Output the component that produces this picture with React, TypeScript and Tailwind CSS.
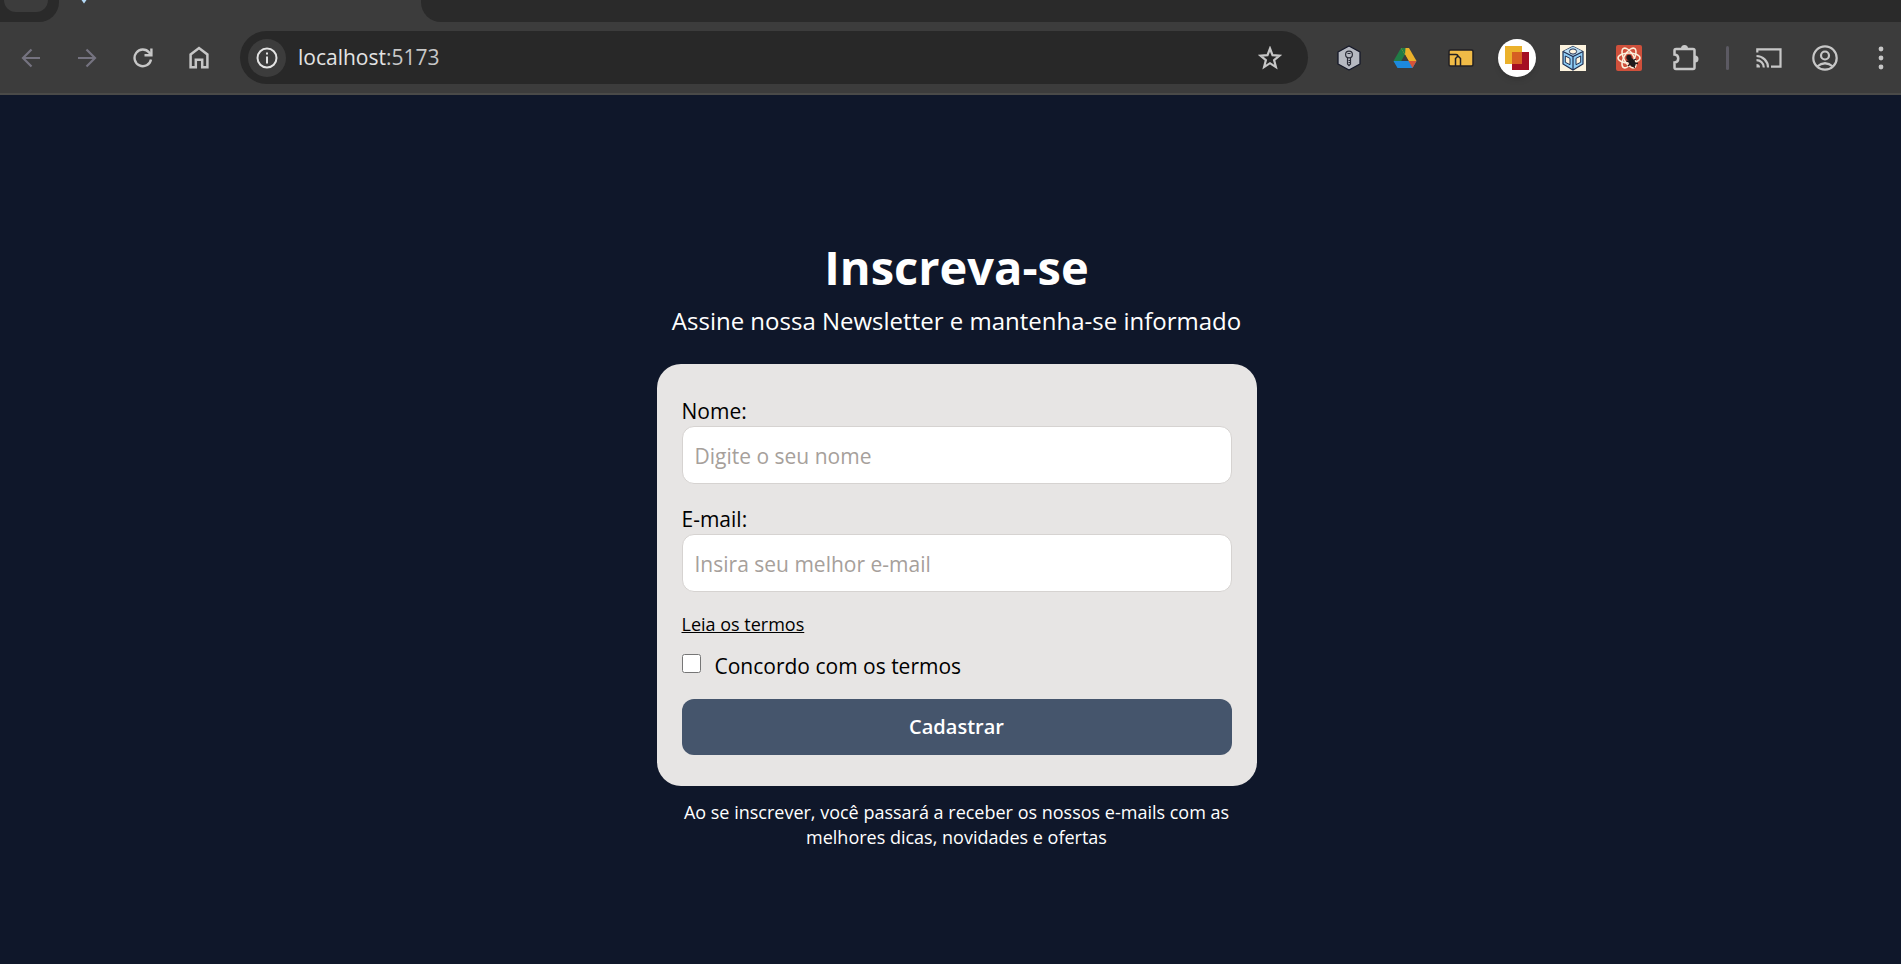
import type { ReactNode } from "react";

function ToolButton({ label, className, children }: { label: string; className: string; children: ReactNode }) {
  return (
    <button type="button" aria-label={label} className={`flex shrink-0 items-center justify-center ${className}`}>
      {children}
    </button>
  );
}

function BackIcon() {
  return (
    <svg width="20" height="20" viewBox="0 0 20 20" fill="none" stroke="currentColor" strokeWidth="2.200">
      <path d="M19 10H2M10.500 1.500L2 10l8.500 8.500" />
    </svg>
  );
}

function ForwardIcon() {
  return (
    <svg width="20" height="20" viewBox="0 0 20 20" fill="none" stroke="currentColor" strokeWidth="2.200">
      <path d="M1 10h17M9.500 1.500L18 10l-8.500 8.500" />
    </svg>
  );
}

function ReloadIcon() {
  return (
    <svg width="20" height="20" viewBox="0 0 20 20" fill="none" stroke="currentColor" strokeWidth="2.400">
      <path d="M18 11.500A8.300 8.300 0 1 1 16.200 4.500L18 7" />
      <path d="M18.400 0.500V7.200H11.500" />
    </svg>
  );
}

function HomeIcon() {
  return (
    <svg width="20" height="23" viewBox="0 0 20 23" fill="none" stroke="currentColor" strokeWidth="2.500">
      <path d="M1.600 8.400L10 2l8.400 6.400v12.900h-5.200v-7.600H6.800v7.600H1.600z" />
    </svg>
  );
}

function InfoIcon() {
  return (
    <svg width="22" height="22" viewBox="0 0 22 22" fill="none" stroke="currentColor" strokeWidth="2">
      <circle cx="11" cy="11" r="9.500" />
      <path d="M11 9.500v7M11 5.500v2" />
    </svg>
  );
}

function StarIcon() {
  return (
    <svg width="24" height="24" viewBox="0 0 24 24" fill="none" stroke="currentColor" strokeWidth="2.200">
      <path d="M12 2.500l2.500 6.600 7 .5-5.400 4.500 1.800 7L12 17.200 6.100 21.100l1.800-7L2.500 9.600l7-.5z" />
    </svg>
  );
}

function KeyIcon() {
  return (
    <svg width="26" height="26" viewBox="0 0 26 26">
      <path d="M13 1l11 6v12l-11 6-11-6V7z" fill="#b6b9c1" stroke="#151828" strokeWidth="1.300" strokeLinejoin="round" />
      <g fill="none" stroke="#2b2d38" strokeWidth="1.200">
        <circle cx="13" cy="9.500" r="3.400" />
        <path d="M11.500 13v6l1.500 1.700 1.500-1.700V13M14.500 15.500h-2M14.500 17.500h-2M11.500 8.500h3" />
      </g>
    </svg>
  );
}

function DriveIcon() {
  return (
    <svg width="24" height="22" viewBox="0 0 24 22">
      <path d="M8 1h8l-4 7-7 13L0.500 14z" fill="#217c46" />
      <path d="M8 1h8l7.500 13h-8z" fill="#ebb12b" />
      <path d="M8 1h4.500L12 7.500z" fill="#217c46" />
      <path d="M0.500 14h23L19.500 21h-15z" fill="#1d89dd" />
      <path d="M15.500 14h8L19.500 21z" fill="#d65439" />
      <path d="M12 7.500L15.700 14H8.300z" fill="#3b3b3b" />
    </svg>
  );
}

function FolderCardIcon() {
  return (
    <svg width="26" height="18" viewBox="0 0 26 18">
      <rect x="1" y="1" width="24" height="16" rx="1.500" fill="#f0bb47" stroke="#201f24" strokeWidth="1.500" />
      <path d="M1 5.500h7q2 0 2 2.500M7.500 17V9.500L9.500 7.500h1l2 2V17" fill="none" stroke="#201f24" strokeWidth="1.500" />
    </svg>
  );
}

function SquaresIcon() {
  return (
    <svg width="26" height="26" viewBox="0 0 26 26">
      <rect x="1" y="1" width="17" height="18" fill="#ebb12b" />
      <rect x="8" y="7" width="17" height="18" fill="#a50f23" />
      <rect x="8" y="7" width="10" height="12" fill="#d65f22" />
    </svg>
  );
}

function CubeIcon() {
  return (
    <svg width="26" height="26" viewBox="0 0 26 26">
      <rect width="26" height="26" fill="#fdf4df" />
      <path d="M13 1.500l10 5V19l-10 6-10-6V6.500z" fill="#8fcdf5" stroke="#1f2f52" strokeWidth="1.200" />
      <path d="M13 1.500l10 5-10 5-10-5z" fill="#b9ddf2" />
      <path d="M3 6.500l10 5 10-5M13 11.500V25" fill="none" stroke="#1f2f52" strokeWidth="1.200" />
      <ellipse cx="13" cy="6.500" rx="3.600" ry="2.600" fill="#fdf4df" stroke="#1f2f52" />
      <path d="M5.300 11l4.700 2.400v6.300L5.300 17.300zM20.700 11L16 13.400v6.300l4.700-2.400z" fill="#fdf4df" stroke="#1f2f52" />
    </svg>
  );
}

function ReactBugIcon() {
  return (
    <svg width="26" height="26" viewBox="0 0 26 26">
      <rect width="26" height="26" rx="2" fill="#d0503b" />
      <g fill="none" stroke="#fbf0dc" strokeWidth="1.500">
        <ellipse cx="13" cy="13" rx="11" ry="5" />
        <ellipse cx="13" cy="13" rx="11" ry="5" transform="rotate(60 13 13)" />
        <ellipse cx="13" cy="13" rx="11" ry="5" transform="rotate(120 13 13)" />
      </g>
      <g fill="#201a1c" stroke="#201a1c" strokeWidth="1.300">
        <circle cx="13" cy="12.500" r="2" />
        <ellipse cx="16" cy="17.500" rx="2.400" ry="4" transform="rotate(-30 16 17.500)" />
        <path d="M10.500 16l4 1M12 21l3-2.500M20 14l-3.500 2M22 18.500l-4-.5M18.500 23l-1-4" fill="none" />
      </g>
    </svg>
  );
}

function PuzzleIcon() {
  return (
    <svg width="27" height="27" viewBox="0 0 27 27">
      <path
        d="M3.500 5h17.500q1.500 0 1.500 1.500v17q0 1.500-1.500 1.500h-17q-1.500 0-1.500-1.500v-5c5-.5 5-7.500 0-8V6.500Q2.500 5 4 5z"
        fill="none"
        stroke="currentColor"
        strokeWidth="2.500"
      />
      <path d="M9 4.500a3.500 3.500 0 0 1 7 0zM23 11.500a3.500 3.500 0 0 1 0 7z" fill="currentColor" />
    </svg>
  );
}

function CastIcon() {
  return (
    <svg width="26" height="20" viewBox="0 0 26 20" fill="none" stroke="currentColor" strokeWidth="2.200">
      <path d="M1.300 4.500V1.300h23.200v17.400H15" />
      <path d="M0.500 8A11.500 11.500 0 0 1 12 19.500M0.500 12.200A7.300 7.300 0 0 1 7.800 19.500" />
      <path d="M0.500 16v3.500H4A3.500 3.500 0 0 0 0.500 16z" fill="currentColor" stroke="none" />
    </svg>
  );
}

function ProfileIcon() {
  return (
    <svg width="26" height="26" viewBox="0 0 26 26" fill="none" stroke="currentColor" strokeWidth="2.200">
      <circle cx="13" cy="13" r="11.700" />
      <circle cx="13" cy="10.500" r="4" />
      <path d="M5 21.500q8-6.500 16 0" />
    </svg>
  );
}

function DotsIcon() {
  return (
    <svg width="6" height="24" viewBox="0 0 6 24" fill="currentColor">
      <circle cx="3" cy="3" r="2.400" />
      <circle cx="3" cy="12" r="2.400" />
      <circle cx="3" cy="21" r="2.400" />
    </svg>
  );
}

function TabStrip() {
  return (
    <div className="flex h-[22px] overflow-hidden bg-[#3c3c3c]">
      <div className="flex w-[59px] shrink-0 items-start justify-center rounded-br-[20px] bg-[#2a2a2a]">
        <div className="-ml-2 h-3 w-11 rounded-b-xl bg-[#3c3c3c]" />
      </div>
      <div className="w-[362px] shrink-0">
        <svg width="6" height="4" viewBox="0 0 6 4" className="ml-[22px]">
          <path d="M0.500 0h5L3 3.500z" fill="#b5daf8" />
        </svg>
      </div>
      <div className="flex-1 rounded-bl-[20px] bg-[#2a2a2a]" />
    </div>
  );
}

function Toolbar() {
  return (
    <div className="flex h-[73px] items-center border-b-2 border-[#4a4a48] bg-[#3c3c3c] text-[#c7c7c7]">
      <div className="flex items-center gap-4 pl-[11px] text-[#757380]">
        <ToolButton label="Voltar" className="size-10"><BackIcon /></ToolButton>
        <ToolButton label="Avançar" className="size-10"><ForwardIcon /></ToolButton>
        <ToolButton label="Recarregar" className="size-10 text-[#c7c7c7]"><ReloadIcon /></ToolButton>
        <ToolButton label="Página inicial" className="size-10 text-[#c7c7c7]"><HomeIcon /></ToolButton>
      </div>
      <div className="ml-[21px] flex h-[53px] flex-1 items-center rounded-full bg-[#282828] pr-[18px] pl-2">
        <ToolButton label="Informações do site" className="size-[38px] rounded-full bg-[#3c3c3c] text-[#e3e3e3]">
          <InfoIcon />
        </ToolButton>
        <div className="ml-3 flex-1 text-[21px] text-[#e3e3e3]">
          localhost<span className="text-[#c7c7c7]">:5173</span>
        </div>
        <ToolButton label="Favoritar" className="size-10"><StarIcon /></ToolButton>
      </div>
      <div className="flex items-center gap-4 pl-[21px]">
        <ToolButton label="Chave" className="size-10"><KeyIcon /></ToolButton>
        <ToolButton label="Drive" className="size-10"><DriveIcon /></ToolButton>
        <ToolButton label="Pasta" className="size-10"><FolderCardIcon /></ToolButton>
        <ToolButton label="Quadros" className="mx-px size-[38px] rounded-full bg-white shadow-md"><SquaresIcon /></ToolButton>
        <ToolButton label="Cubo" className="size-10"><CubeIcon /></ToolButton>
        <ToolButton label="React" className="size-10"><ReactBugIcon /></ToolButton>
        <ToolButton label="Extensões" className="size-10"><PuzzleIcon /></ToolButton>
      </div>
      <div className="mr-5 ml-[21px] h-6 w-[3px] rounded-full bg-[#5c5a63]" />
      <div className="flex items-center gap-4">
        <ToolButton label="Transmitir" className="size-10"><CastIcon /></ToolButton>
        <ToolButton label="Perfil" className="size-10"><ProfileIcon /></ToolButton>
        <ToolButton label="Menu" className="size-10"><DotsIcon /></ToolButton>
      </div>
    </div>
  );
}

function Field({ id, label, type, placeholder }: { id: string; label: string; type: string; placeholder: string }) {
  return (
    <div className="flex flex-col">
      <label htmlFor={id} className="pb-0.5 text-[21px] leading-[26px]">{label}</label>
      <input
        id={id}
        type={type}
        placeholder={placeholder}
        className="h-[58px] w-full rounded-xl border border-[#d6d3d1] bg-white px-3 pt-0.5 text-[21px] placeholder:text-[#a6a09b]"
      />
    </div>
  );
}

export default function App() {
  return (
    <div className="flex min-h-screen flex-col bg-[#0f172a] font-['Open_Sans','Noto_Sans',sans-serif]">
      <header>
        <TabStrip />
        <Toolbar />
      </header>
      <main className="flex flex-1 flex-col items-center pt-[142px] pl-3 text-white">
        <h1 className="text-[47px] leading-[60px] font-bold">Inscreva-se</h1>
        <p className="text-[24px] leading-[48px]">Assine nossa Newsletter e mantenha-se informado</p>
        <form className="mt-[19px] flex w-full max-w-[600px] flex-col rounded-3xl bg-[#e7e5e4] px-[25px] pt-[34px] pb-[31px] text-black">
          <div className="flex flex-col gap-[22px]">
            <Field id="nome" label="Nome:" type="text" placeholder="Digite o seu nome" />
            <Field id="email" label="E-mail:" type="email" placeholder="Insira seu melhor e-mail" />
          </div>
          <a href="#termos" className="mt-[18px] self-start text-[18px] leading-7 underline">Leia os termos</a>
          <div className="mt-3 flex items-start gap-[14px]">
            <input id="termos" type="checkbox" className="mt-1 size-[19px]" />
            <label htmlFor="termos" className="text-[21px] leading-8">Concordo com os termos</label>
          </div>
          <button type="submit" className="mt-[17px] h-14 rounded-xl bg-[#45556c] text-[20px] font-semibold text-white">
            Cadastrar
          </button>
        </form>
        <p className="mt-[14px] max-w-[560px] text-center text-[18px] leading-[25px]">
          Ao se inscrever, você passará a receber os nossos e-mails com as melhores dicas, novidades e ofertas
        </p>
      </main>
    </div>
  );
}
